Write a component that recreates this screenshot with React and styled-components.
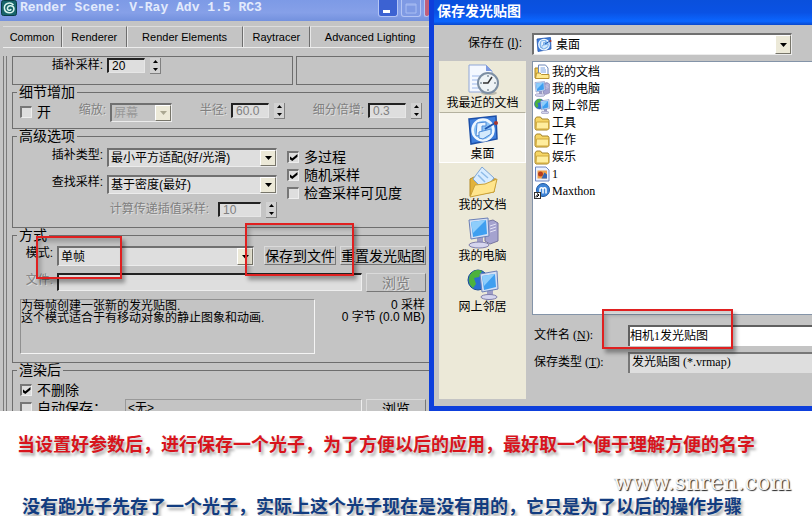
import React from 'react';
import styled, { createGlobalStyle } from 'styled-components';

const PLACES = [
    { name: '我最近的文档', icon: 'recent' },
    { name: '桌面', icon: 'desktop', active: true },
    { name: '我的文档', icon: 'documents' },
    { name: '我的电脑', icon: 'computer' },
    { name: '网上邻居', icon: 'network' },
];

const FILES = [
    { name: '我的文档', icon: 'docfolder' },
    { name: '我的电脑', icon: 'computer' },
    { name: '网上邻居', icon: 'network' },
    { name: '工具', icon: 'folder' },
    { name: '工作', icon: 'folder' },
    { name: '娱乐', icon: 'folder' },
    { name: '1', icon: 'image' },
    { name: 'Maxthon', icon: 'maxthon' },
];

const TABS = [
    { name: 'Common', size: 59 },
    { name: 'Renderer', size: 64 },
    { name: 'Render Elements', size: 116 },
    { name: 'Raytracer', size: 67 },
    { name: 'Advanced Lighting', size: 120 },
];

const shapes = {
    recent: (
        <>
            <path d="M2 1h17l6 6v21H2z" fill="#f4f8ff" stroke="#8fa6d8" />
            <path d="M19 1v6h6z" fill="#7f9be0" />
            <path d="M5 12h9M5 16h7M5 20h7M5 24h8" stroke="#9db8ea" />
            <ellipse cx="22" cy="29" rx="8" ry="2" fill="#8e8e86" opacity=".5" />
            <circle cx="21" cy="19" r="10" fill="#eef3f6" stroke="#7d8fa3" strokeWidth="2" />
            <path d="M21 11v2M21 25v2M13 19h2M27 19h2" stroke="#567" />
            <path d="M25 13l-4 6h-5" fill="none" stroke="#333" strokeWidth="1.5" />
        </>
    ),
    desktop: (
        <>
            <path d="M2 4l27-3 1 23-26 5z" fill="#3f7fdc" stroke="#1c4fa8" strokeWidth="1.5" />
            <circle cx="16" cy="15" r="10.5" fill="#8cc4f6" stroke="#eef7ff" strokeWidth="2.5" />
            <path d="M10 8l9-1v4h-4v9l-6 1z" fill="#eaf5ff" stroke="#4c8ad8" />
            <path d="M12 17l12-3v5l-8 5-4-1z" fill="#d4eafc" stroke="#4c8ad8" />
            <path d="M18 14l10-6" stroke="#1f57b0" strokeWidth="2" />
            <circle cx="29" cy="8" r="2" fill="#a8362c" />
        </>
    ),
    documents: (
        <>
            <path d="M3 13l4-2 22 2-2 13-24 4z" fill="#e2b33c" stroke="#b58a24" />
            <path d="M15 1l12 11-10 12L6 13z" fill="#d8ecff" stroke="#7fa6d4" />
            <path d="M14 6l7 6M11 9l7 7" stroke="#8ebbe8" strokeWidth="1.5" />
            <path d="M3 31l5-12 10-1 12-5-3 13z" fill="#ffe58c" stroke="#caa23a" />
        </>
    ),
    computer: (
        <>
            <path d="M18 5l8-2 5 3v18l-8 3-5-3z" fill="#a5a3cf" stroke="#77759f" />
            <path d="M23 9l6-2M23 12l6-2M23 15l6-2" stroke="#e3e2f5" />
            <path d="M10 20h6v7h-6z" fill="#9d9cc6" />
            <ellipse cx="12" cy="28" rx="10" ry="3" fill="#d5d5ee" stroke="#7f7eab" />
            <path d="M2 3l19-2 1 18-18 3z" fill="#d4e0f5" stroke="#6b7fb6" />
            <path d="M4 5l15-2 1 14-14 3z" fill="#3f9ff0" />
            <path d="M4 5l15-2-13 13z" fill="#8ecdfb" />
        </>
    ),
    network: (
        <>
            <circle cx="11" cy="12" r="10" fill="#2a6fd0" stroke="#1a4c92" />
            <path d="M3 7c3-5 8-6 12-4l-3 6-5 1 2 6-3 4c-4-3-5-8-3-13z" fill="#4cb23c" />
            <path d="M20 22h6v6h-6z" fill="#9d9cc6" />
            <ellipse cx="22" cy="29" rx="8" ry="2.5" fill="#d5d5ee" stroke="#7f7eab" />
            <path d="M13 6l17-3 1 18-16 3z" fill="#d4e0f5" stroke="#6b7fb6" />
            <path d="M15 8l13-2 1 13-12 3z" fill="#3f9ff0" />
            <path d="M15 8l13-2-11 12z" fill="#8ecdfb" />
        </>
    ),
    folder: (
        <>
            <path d="M2 8l3-4h8l3 4h12l2 3v16l-3 3H4l-2-3z" fill="#f5d565" stroke="#a5842a" strokeWidth="2" />
            <path d="M4 28l1-14h24v14z" fill="#ffee9e" stroke="#d0a93e" strokeWidth="2" />
        </>
    ),
    docfolder: (
        <>
            <path d="M2 8h9v20H2z" fill="#f0ca52" stroke="#a5842a" strokeWidth="2" />
            <path d="M9 2h14l5 6v16H9z" fill="#fff" stroke="#6d87b8" strokeWidth="2" />
            <path d="M13 8h9M13 12h11M13 16h11" stroke="#7aa2e0" strokeWidth="2" />
            <path d="M3 29l2-11h7l3 3h15v8z" fill="#ffe98f" stroke="#b9922f" strokeWidth="2" />
        </>
    ),
    image: (
        <>
            <path d="M3 2h21l6 6v22H3z" fill="#eaf1ff" stroke="#6c85c0" strokeWidth="2" />
            <rect x="7" y="9" width="19" height="16" fill="#f0a04a" />
            <circle cx="13" cy="16" r="5" fill="#b63d1e" />
            <path d="M15 25l6-12 5 4v8z" fill="#3668b4" />
        </>
    ),
    maxthon: (
        <>
            <circle cx="18" cy="14" r="13" fill="#3f86d8" stroke="#1f57a0" strokeWidth="2" />
            <path d="M12 21v-8c0-5 6-5 6 0v8m0-8c0-5 6-5 6 0v8" fill="none" stroke="#fff" strokeWidth="3" />
            <rect x="1" y="19" width="12" height="12" fill="#fff" stroke="#333" strokeWidth="2" />
            <path d="M4 29c0-4 2-5 5-5m-3-3l4 3-4 4" fill="none" stroke="#000" strokeWidth="2" />
        </>
    ),
    logo: (
        <>
            <rect x="1" y="1" width="30" height="30" rx="4" fill="#17646a" stroke="#0a3c44" strokeWidth="2" />
            <path d="M25 10C18 2 5 7 7 18c2 10 18 10 19 0 0-8-12-9-13-2-1 5 6 6 7 2" fill="none" stroke="#d9f4ee" strokeWidth="3" />
        </>
    ),
};

const Icon = ({ name, size }) => (
    <Svg width={size} height={size} viewBox="0 0 32 32" aria-hidden="true">{shapes[name]}</Svg>
);

const DropDown = ({ id, value, width, height, icon, tone, disabled }) => (
    <SelectBox $width={width} $height={height} $tone={tone}>
        {icon && <Icon name={icon} size={16} />}
        <Select id={id} disabled={disabled} $icon={icon}>
            <option>{value}</option>
        </Select>
        <Arrow $disabled={disabled}>
            <svg width="7" height="4" viewBox="0 0 7 4"><path d="M0 0h7L3.500 4z" fill="currentColor" /></svg>
        </Arrow>
    </SelectBox>
);

const NumberField = ({ id, value, disabled, wide }) => (
    <NumberBox>
        <NumberInput id={id} defaultValue={value} disabled={disabled} $wide={wide} />
        <Spinner>
            <SpinButton type="button" aria-label="+">
                <svg width="5" height="3" viewBox="0 0 5 3"><path d="M0 3h5L2.500 0z" /></svg>
            </SpinButton>
            <SpinButton type="button" aria-label="-">
                <svg width="5" height="3" viewBox="0 0 5 3"><path d="M0 0h5L2.500 3z" /></svg>
            </SpinButton>
        </Spinner>
    </NumberBox>
);

const Check = ({ text, checked }) => (
    <CheckLabel>
        <CheckInput type="checkbox" defaultChecked={checked} />
        {text}
    </CheckLabel>
);

const RenderWindow = () => (
    <RenderFrame>
        <RenderTitle>
            <Icon name="logo" size={16} />
            <RenderName>Render Scene: V-Ray Adv 1.5 RC3</RenderName>
            <WindowButton type="button" aria-label="Minimize">
                <svg width="18" height="16"><path d="M4 10h7v3H4z" fill="#fff" /></svg>
            </WindowButton>
            <WindowButton type="button" aria-label="Maximize" $faded>
                <svg width="18" height="16"><path d="M4 4h10v9H4zM4 5h10" fill="none" stroke="#a9bdf3" /></svg>
            </WindowButton>
            <CloseButton type="button" aria-label="Close" />
        </RenderTitle>
        <Tabs role="tablist">
            {TABS.map((tab) => (
                <Tab key={tab.name} type="button" role="tab" $size={tab.size}>{tab.name}</Tab>
            ))}
        </Tabs>
        <RenderBody>
            <TopGroups>
                <TopGroup $size={281}>
                    <Label htmlFor="interp" $width={90}>插补采样:</Label>
                    <NumberField id="interp" value="20" />
                </TopGroup>
                <TopGroup $size={133} />
            </TopGroups>

            <Group $space={6}>
                <legend>细节增加</legend>
                <DetailRow>
                    <Check text="开" />
                    <Field>
                        <Label htmlFor="scale" $dim>缩放:</Label>
                        <DropDown id="scale" value="屏幕" width="62px" height={19} tone="#c4c4c4" disabled />
                    </Field>
                    <Field>
                        <Label htmlFor="radius" $dim>半径:</Label>
                        <NumberField id="radius" value="60.0" disabled />
                    </Field>
                    <Field>
                        <Label htmlFor="subdivs" $dim>细分倍增:</Label>
                        <NumberField id="subdivs" value="0.3" disabled />
                    </Field>
                </DetailRow>
            </Group>

            <Group $space={9}>
                <legend>高级选项</legend>
                <AdvancedRow>
                    <Stack>
                        <Field>
                            <Label htmlFor="type" $width={90}>插补类型:</Label>
                            <DropDown id="type" value="最小平方适配(好/光滑)" width="170px" height={19} />
                        </Field>
                        <Field>
                            <Label htmlFor="lookup" $width={90}>查找采样:</Label>
                            <DropDown id="lookup" value="基于密度(最好)" width="170px" height={19} />
                        </Field>
                        <Field $end>
                            <Label htmlFor="passes" $dim>计算传递插值采样:</Label>
                            <NumberField id="passes" value="10" disabled wide />
                        </Field>
                    </Stack>
                    <Checks>
                        <Check text="多过程" checked />
                        <Check text="随机采样" checked />
                        <Check text="检查采样可见度" />
                    </Checks>
                </AdvancedRow>
            </Group>

            <Group $space={8}>
                <legend>方式</legend>
                <ModeRow>
                    <Label htmlFor="mode" $width={40}>模式:</Label>
                    <DropDown id="mode" value="单帧" height={20} />
                    <ModeButtons>
                        <PanelButton type="button">保存到文件</PanelButton>
                        <PanelButton type="button">重置发光贴图</PanelButton>
                        <SaveMark />
                    </ModeButtons>
                    <ModeMark />
                </ModeRow>
                <ModeRow>
                    <Label htmlFor="file" $width={40} $dim>文件:</Label>
                    <PathInput id="file" disabled />
                    <BrowseButton type="button" disabled>浏览</BrowseButton>
                </ModeRow>
                <InfoRow>
                    <InfoBox>
                        为每帧创建一张新的发光贴图.<br />
                        这个模式适合于有移动对象的静止图象和动画.
                    </InfoBox>
                    <Stats>
                        0 采样<br />
                        0 字节 (0.0 MB)
                    </Stats>
                </InfoRow>
            </Group>

            <Group $space={0}>
                <legend>渲染后</legend>
                <AfterRow>
                    <Check text="不删除" checked />
                </AfterRow>
                <AfterRow>
                    <Check text="自动保存：" />
                    <AutoPath>&lt;无&gt;</AutoPath>
                    <BrowseButton type="button">浏览</BrowseButton>
                </AfterRow>
            </Group>
        </RenderBody>
    </RenderFrame>
);

const SaveDialog = () => (
    <DialogFrame>
        <DialogTitle>保存发光贴图</DialogTitle>
        <DialogBody>
            <LookRow>
                <DialogLabel htmlFor="look" $end>保存在 (<u>I</u>):</DialogLabel>
                <DropDown id="look" value="桌面" height={22} icon="desktop" tone="#fff" />
            </LookRow>
            <DialogMain>
                <Places>
                    {PLACES.map((place) => (
                        <Place key={place.name} type="button" $active={place.active}>
                            <Icon name={place.icon} size={32} />
                            {place.name}
                        </Place>
                    ))}
                </Places>
                <DialogRight>
                    <FileList>
                        {FILES.map((file) => (
                            <FileItem key={file.name}>
                                <Icon name={file.icon} size={16} />
                                {file.name}
                            </FileItem>
                        ))}
                    </FileList>
                    <NameRow>
                        <DialogLabel htmlFor="filename">文件名 (<u>N</u>):</DialogLabel>
                        <NameInput id="filename" defaultValue="相机1发光贴图" />
                        <NameMark />
                    </NameRow>
                    <NameRow>
                        <DialogLabel htmlFor="filetype">保存类型 (<u>T</u>):</DialogLabel>
                        <TypeSelect id="filetype">
                            <option>发光贴图 (*.vrmap)</option>
                        </TypeSelect>
                    </NameRow>
                </DialogRight>
            </DialogMain>
        </DialogBody>
    </DialogFrame>
);

const App = () => {
    return (
        <Page>
            <GlobalStyle />
            <Windows>
                <RenderWindow />
                <SaveDialog />
            </Windows>
            <Captions>
                <Caption $color="#d8141c">当设置好参数后，进行保存一个光子，为了方便以后的应用，最好取一个便于理解方便的名字</Caption>
                <Watermark href="http://www.snren.com">www.snren.com</Watermark>
                <Caption $color="#123c80" $indent>没有跑光子先存了一个光子，实际上这个光子现在是没有用的，它只是为了以后的操作步骤</Caption>
            </Captions>
        </Page>
    );
}

export default App;

const GlobalStyle = createGlobalStyle`
    * {
        box-sizing: border-box;
    }

    body {
        margin: 0;
        background: #fff;
    }

    button, input, select {
        font: inherit;
        color: inherit;
        margin: 0;
        padding: 0;
        border: 0;
        border-radius: 0;
        outline: none;
    }
`

const Page = styled.main`
    font: 12px/14px "Liberation Sans", "Noto Sans CJK SC", sans-serif;
    color: #000;
    overflow: hidden;
`

const Windows = styled.div`
    display: grid;
    grid-template-columns: 429fr 383fr;
`

const Svg = styled.svg`
    flex: none;
    display: block;
`

/* render window, cut off where the dialog ends */
const RenderFrame = styled.section`
    height: 0;
    min-height: 100%;
    overflow: hidden;
    background: #c4c4c4;
`

const RenderTitle = styled.header`
    display: flex;
    gap: 3px;
    height: 21px;
    padding-left: 1px;
    overflow: hidden;
    background: linear-gradient(#7d9ae6, #86a0e8 60%, #7391de);
`

const RenderName = styled.h1`
    flex: 1;
    margin: 0;
    font: bold 13px/16px "Liberation Mono", monospace;
    color: #e2eafc;
    white-space: nowrap;
`

const WindowButton = styled.button`
    width: 20px;
    height: 17px;
    border: 1px solid #b4c5f5;
    border-top: 0;
    border-radius: 0 0 3px 3px;
    background: ${(p) => (p.$faded ? '#7f9ae4' : '#3c62d2')};
`

const CloseButton = styled(WindowButton)`
    width: 5px;
    border-right: 0;
    background: #c0607c;
`

const Tabs = styled.div`
    display: flex;
    height: 22px;
    margin: 5px 0 0 3px;
    border-bottom: 1px solid #ececec;
`

const Tab = styled.button`
    flex: ${(p) => p.$size} 1 0;
    border-top: 1px solid #dcdcdc;
    border-left: 1px solid #e8e8e8;
    border-right: 1px solid #6e6e6e;
    background: #c4c4c4;
    font-size: 11px;
    white-space: nowrap;

    &:first-child {
        border-left: 0;
    }

    &:last-child {
        border-right: 0;
    }
`

const RenderBody = styled.div`
    margin: 8px 0 0 3px;
    padding-left: 5px;
    border-left: 4px double #7a7a7a;
`

const TopGroups = styled.div`
    display: flex;
    gap: 3px;
`

const TopGroup = styled.div`
    display: flex;
    gap: 4px;
    flex: ${(p) => p.$size} 1 0;
    height: 29px;
    padding-top: 1px;
    border: 1px solid #6e6e6e;

    &:last-child {
        border-right: 0;
    }
`

const Group = styled.fieldset`
    min-width: 0;
    margin: 0;
    padding: 4px 0 ${(p) => p.$space}px;
    border: 1px solid #6e6e6e;
    border-right: 0;

    legend {
        margin-left: 4px;
        padding: 0 2px;
        font-size: 14px;
        line-height: 14px;
    }
`

const Label = styled.label`
    flex: none;
    width: ${(p) => (p.$width ? p.$width + 'px' : 'auto')};
    text-align: right;
    color: ${(p) => (p.$dim ? '#808080' : '#000')};
    text-shadow: ${(p) => (p.$dim ? '1px 1px #dedede' : 'none')};
    white-space: nowrap;
`

const Field = styled.div`
    display: flex;
    gap: ${(p) => (p.$end ? 9 : 4)}px;
    justify-content: ${(p) => (p.$end ? 'flex-end' : 'flex-start')};
`

const SelectBox = styled.div`
    display: flex;
    align-items: center;
    flex: ${(p) => (p.$width ? 'none' : '1')};
    width: ${(p) => p.$width || 'auto'};
    min-width: 0;
    height: ${(p) => p.$height}px;
    padding-left: 2px;
    border: 1px solid;
    border-width: 2px 1px 1px 2px;
    border-color: #707070 #ececec #ececec #707070;
    background: ${(p) => p.$tone || '#dedede'};
`

const Select = styled.select`
    appearance: none;
    flex: 1;
    min-width: 0;
    padding-left: ${(p) => (p.$icon ? 4 : 0)}px;
    background: transparent;
    text-overflow: clip;

    &:disabled {
        color: #999;
        opacity: 1;
    }
`

const Arrow = styled.span`
    display: flex;
    align-items: center;
    justify-content: center;
    width: 16px;
    height: 100%;
    border: 1px solid;
    border-color: #fff #77756a #77756a #fff;
    background: #ece9d8;
    color: ${(p) => (p.$disabled ? '#aaa792' : '#000')};
    pointer-events: none;
`

const NumberBox = styled.div`
    display: flex;
    gap: 5px;
`

const NumberInput = styled.input`
    width: ${(p) => (p.$wide ? 43 : 38)}px;
    height: 15px;
    padding-left: 3px;
    border: 1px solid;
    border-width: 2px 1px 1px 2px;
    border-color: #222 #e6e6e6 #e6e6e6 #222;
    background: #dedede;

    &:disabled {
        color: #808080;
    }
`

const Spinner = styled.div`
    display: flex;
    flex-direction: column;
    width: 11px;
    height: 16px;
    border-right: 1px solid #808080;
    border-bottom: 1px solid #808080;
    background: #d2d2d2;
`

const SpinButton = styled.button`
    display: flex;
    flex: 1;
    align-items: center;
    justify-content: center;
    min-height: 0;
    background: transparent;
`

const CheckLabel = styled.label`
    display: flex;
    gap: 5px;
    align-items: center;
    height: 18px;
    font-size: 14px;
    white-space: nowrap;
`

const CheckInput = styled.input`
    appearance: none;
    display: grid;
    place-items: center;
    width: 12px;
    height: 12px;
    border: 1px solid;
    border-width: 2px 1px 1px 2px;
    border-color: #777 #eee #eee #777;
    background: #dedede;

    &:checked::before {
        content: '';
        width: 8px;
        height: 7px;
        background: #000;
        clip-path: polygon(0 30%, 35% 60%, 100% 0, 100% 40%, 35% 100%, 0 70%);
    }
`

const DetailRow = styled.div`
    display: flex;
    justify-content: space-between;
    padding: 0 7px;
`

const AdvancedRow = styled.div`
    display: flex;
    gap: 10px;
    padding-top: 1px;
`

const Stack = styled.div`
    display: flex;
    flex-direction: column;
    gap: 8px;
`

const Checks = styled.div`
    display: flex;
    flex-direction: column;
`

const ModeRow = styled.div`
    position: relative;
    display: flex;
    gap: 4px;
    margin-bottom: 7px;
    padding-right: 3px;
`

const ModeButtons = styled.div`
    display: flex;
    gap: 4px;
    margin-left: 6px;
`

const PanelButton = styled.button`
    height: 19px;
    border: 1px solid;
    border-color: #dadada #777 #777 #dadada;
    background: #c4c4c4;
    font-size: 14px;
    line-height: 16px;
    white-space: nowrap;
`

const BrowseButton = styled(PanelButton)`
    width: 60px;

    &:disabled {
        color: #808080;
        text-shadow: 1px 1px #e2e2e2;
    }
`

const PathInput = styled.input`
    flex: 1;
    min-width: 0;
    height: 18px;
    border: 1px solid;
    border-width: 2px 1px 1px 2px;
    border-color: #222 #eee #eee #222;
    background: #dedede;
`

const InfoRow = styled.div`
    display: flex;
    justify-content: space-between;
    padding: 0 4px 0 7px;
    line-height: 12px;
    white-space: nowrap;
`

const InfoBox = styled.p`
    flex: 0 1 295px;
    height: 55px;
    margin: 0;
    border: 1px solid;
    border-color: #909090 #f4f4f4 #f4f4f4 #909090;
`

const Stats = styled.p`
    margin: 0;
    text-align: right;
`

const AfterRow = styled.div`
    display: flex;
    gap: 4px;
    padding: 0 3px 0 7px;
    line-height: 16px;

    ${CheckLabel} {
        min-width: 101px;
    }
`

const AutoPath = styled.output`
    flex: 1;
    padding-left: 2px;
    border: 1px solid;
    border-color: #999 #eee #eee #999;
`

/* red frames over the controls to use */
const Mark = styled.div`
    position: absolute;
    z-index: 1;
    border: 2px solid #e02020;
    box-shadow: 3px 4px 4px rgba(0, 0, 0, 0.35), inset 3px 4px 4px rgba(0, 0, 0, 0.2);
    pointer-events: none;
`

const ModeMark = styled(Mark)`
    top: -10px;
    left: 23px;
    width: 86px;
    height: 43px;
`

const SaveMark = styled(Mark)`
    top: -23px;
    right: 75px;
    width: 109px;
    height: 53px;
`

const NameMark = styled(Mark)`
    top: -16px;
    left: 70px;
    width: 131px;
    height: 40px;
`

const DialogFrame = styled.section`
    min-width: 0;
    border: 5px solid #0d3fdc;
    border-width: 0 0 5px 5px;
    background: #c4c4c4;
`

const DialogTitle = styled.h2`
    height: 25px;
    margin: 0;
    padding: 4px 3px;
    background: linear-gradient(#0a50dc, #0a52e4 50%, #0b66ff 85%, #0a48cc);
    color: #fff;
    font-size: 14px;
    line-height: 14px;
`

const DialogBody = styled.div`
    padding: 8px 0 7px 5px;
`

const LookRow = styled.div`
    display: flex;
    gap: 10px;
    padding-right: 20px;
`

const DialogLabel = styled.label`
    flex: none;
    width: ${(p) => (p.$end ? 83 : 91)}px;
    padding-top: 3px;
    text-align: ${(p) => (p.$end ? 'right' : 'left')};
    white-space: nowrap;
`

const DialogMain = styled.div`
    display: flex;
    gap: 6px;
    margin-top: 6px;
`

const Places = styled.nav`
    flex: none;
    width: 87px;
    background: #ece9d8;
`

const Place = styled.button`
    display: flex;
    flex-direction: column;
    align-items: center;
    width: 100%;
    height: 51px;
    padding-top: 2px;
    border: 1px solid ${(p) => (p.$active ? '#fff' : 'transparent')};
    border-top-color: ${(p) => (p.$active ? '#b4b19f' : 'transparent')};
    background: ${(p) => (p.$active ? '#f6f4ec' : 'transparent')};
    white-space: nowrap;
`

const DialogRight = styled.div`
    flex: 1;
    min-width: 0;
    padding-bottom: 20px;
`

const FileList = styled.ul`
    height: 254px;
    margin: 0 0 10px;
    padding: 1px 0 0 1px;
    border: 1px solid #8494a8;
    border-width: 1px 0 1px 1px;
    background: #fff;
    list-style: none;
`

const FileItem = styled.li`
    display: flex;
    gap: 2px;
    align-items: center;
    height: 17px;
    font-family: "Liberation Serif", "Noto Sans CJK SC", serif;
`

const NameRow = styled.div`
    position: relative;
    display: flex;
    gap: 3px;
    margin-bottom: 6px;
    padding-left: 2px;
    font-family: "Liberation Serif", "Noto Sans CJK SC", serif;
`

const NameInput = styled.input`
    flex: 1;
    min-width: 0;
    height: 21px;
    padding-bottom: 3px;
    border: 2px solid #606060;
    border-width: 2px 0 0 2px;
    background: #fff;
`

const TypeSelect = styled.select`
    appearance: none;
    flex: 1;
    min-width: 0;
    height: 21px;
    padding: 0 0 3px 2px;
    border: 2px solid #777;
    border-width: 2px 0 0 2px;
    background: #dedede;
`

const Captions = styled.div`
    display: flex;
    flex-direction: column;
    padding: 21px 0 0 17px;
`

const Caption = styled.p`
    margin: 0;
    padding-left: ${(p) => (p.$indent ? 5 : 0)}px;
    color: ${(p) => p.$color};
    font: bold 18px/22px "Noto Sans CJK SC", sans-serif;
    text-shadow: 2px 3px 3px rgba(0, 0, 0, 0.35);
    white-space: nowrap;
`

const Watermark = styled.a`
    align-self: flex-end;
    margin: 18px 21px 0 0;
    color: #f4f4f4;
    font: 22px/22px "DejaVu Serif", serif;
    text-decoration: none;
    text-shadow: 1px 1px 1px #222;
`
